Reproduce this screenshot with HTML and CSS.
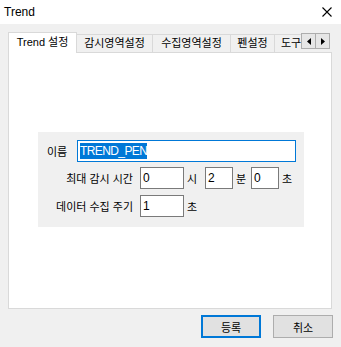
FILE: index.html
```html
<!DOCTYPE html>
<html lang="ko">
<head>
    <meta charset="UTF-8">
    <title>Trend</title>
    <link rel="stylesheet" href="styles.css">
</head>
<body>
    <div class="titlebar">
        <span class="title">Trend</span>
        <svg class="close" width="10" height="10" viewBox="0 0 10 10">
            <path d="M0.5 0.5 L9.5 9.5 M9.5 0.5 L0.5 9.5" stroke="#000" stroke-width="1.1" fill="none"/>
        </svg>
    </div>

    <div class="main">
        <div class="tabbar">
            <div class="tablist">
                <div class="tab active t1">Trend 설정</div>
                <div class="tab t2">감시영역설정</div>
                <div class="tab t3">수집영역설정</div>
                <div class="tab t4">펜설정</div>
                <div class="tab t5">도구모음</div>
            </div>
            <div class="scroller">
                <div class="scroll-btn">
                    <svg width="4" height="7" viewBox="0 0 4 7"><path d="M4 0 L0 3.5 L4 7 Z" fill="#000"/></svg>
                </div>
                <div class="scroll-btn">
                    <svg width="4" height="7" viewBox="0 0 4 7"><path d="M0 0 L4 3.5 L0 7 Z" fill="#000"/></svg>
                </div>
            </div>
        </div>

        <div class="panel">
            <div class="group">
                <div class="row row-name">
                    <label class="name-label">이름</label>
                    <div class="field field-name"><span class="selected">TREND_PEN</span></div>
                </div>
                <div class="row">
                    <label class="row-label">최대 감시 시간</label>
                    <div class="field field-wide">0</div>
                    <span class="unit">시</span>
                    <div class="field field-small gap-wide">2</div>
                    <span class="unit">분</span>
                    <div class="field field-small gap-narrow">0</div>
                    <span class="unit">초</span>
                </div>
                <div class="row">
                    <label class="row-label">데이터 수집 주기</label>
                    <div class="field field-wide">1</div>
                    <span class="unit">초</span>
                </div>
            </div>
        </div>

        <div class="buttons">
            <button class="btn btn-default">등록</button>
            <button class="btn">취소</button>
        </div>
    </div>
</body>
</html>
```

FILE: styles.css
```css
body {
    margin: 0;
    width: 341px;
    height: 347px;
    background-color: #f0f0f0;
    font-family: "Liberation Sans", "Noto Sans CJK KR", sans-serif;
    font-size: 11px;
    color: #000;
    overflow: hidden;
}
.titlebar {
    height: 24px;
    background: #fff;
    display: flex;
    align-items: center;
    justify-content: space-between;
    padding: 0 9px 0 4px;
}
.title {
    font-size: 12px;
}
.main {
    padding: 8px 9px 0 8px;
}
.tabbar {
    display: flex;
    height: 21px;
}
.tablist {
    display: flex;
    align-items: flex-end;
    width: 293px;
    overflow: hidden;
}
.tab {
    flex: none;
    box-sizing: border-box;
    height: 18px;
    margin-bottom: 1px;
    border: 1px solid #d9d9d9;
    border-bottom: none;
    margin-left: -1px;
    background: #f0f0f0;
    text-align: center;
    line-height: 17px;
    white-space: nowrap;
}
.tab.active {
    height: 21px;
    margin-bottom: 0;
    margin-left: 0;
    background: #fff;
    line-height: 19px;
    position: relative;
    z-index: 1;
}
.t1 { width: 69px; }
.t2 { width: 77px; }
.t3 { width: 79px; }
.t4 { width: 45px; }
.t5 { width: 60px; text-align: left; padding-left: 6px; }
.scroller {
    display: flex;
    margin-top: 1px;
    height: 16px;
}
.scroll-btn {
    box-sizing: border-box;
    width: 15px;
    height: 16px;
    border: 1px solid #adadad;
    background: #e6e6e6;
    display: flex;
    align-items: center;
    justify-content: center;
}
.scroll-btn + .scroll-btn {
    margin-left: -1px;
}
.panel {
    box-sizing: border-box;
    width: 324px;
    height: 257px;
    margin-top: -1px;
    border: 1px solid #d9d9d9;
    background: #fff;
    padding: 79px 0 0 29px;
}
.group {
    box-sizing: border-box;
    width: 266px;
    height: 95px;
    background: #f0f0f0;
    padding: 8px 8px 0 0;
}
.row {
    display: flex;
    align-items: center;
    height: 22px;
    margin-top: 6px;
}
.row-name {
    margin-top: 0;
    margin-bottom: -1px;
    padding-left: 9px;
}
.name-label {
    width: 30px;
}
.row-label {
    width: 95px;
    margin-right: 7px;
    text-align: right;
}
.field {
    box-sizing: border-box;
    height: 22px;
    border: 1px solid #7a7a7a;
    background: #fff;
    padding: 0 2px;
    line-height: 20px;
    font-size: 12px;
}
.field-name {
    flex: 1;
    border-color: #0078d7;
    letter-spacing: -0.6px;
}
.selected {
    background: #0078d7;
    color: #fff;
    padding: 1px 0;
}
.field-wide {
    width: 44px;
}
.field-small {
    width: 28px;
}
.gap-wide {
    margin-left: 6px;
}
.gap-narrow {
    margin-left: 3px;
}
.unit {
    width: 12px;
    margin-left: 3px;
}
.buttons {
    display: flex;
    justify-content: flex-end;
    gap: 12px;
    margin-top: 6px;
    margin-right: -1px;
}
.btn {
    box-sizing: border-box;
    width: 60px;
    height: 23px;
    border: 1px solid #adadad;
    background: #e1e1e1;
    font-family: "Liberation Sans", "Noto Sans CJK KR", sans-serif;
    font-size: 11px;
    padding: 0;
}
.btn-default {
    border: 2px solid #0078d7;
}
```
